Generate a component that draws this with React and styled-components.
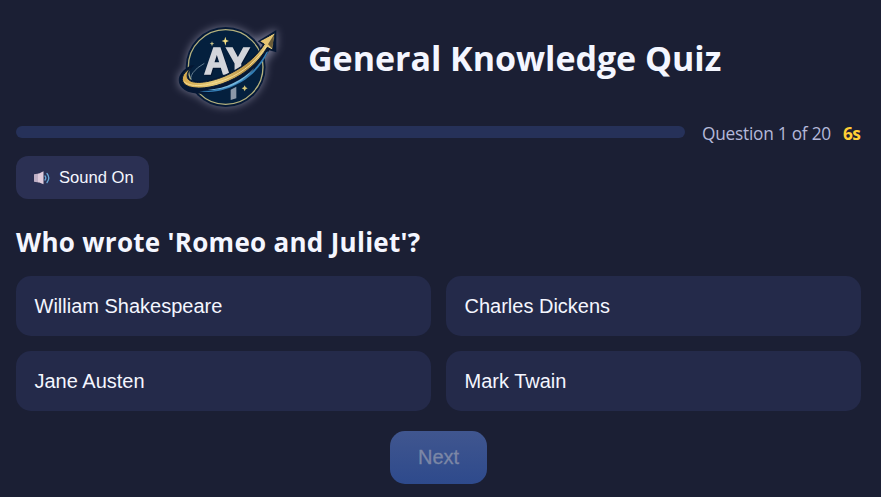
import React from "react";
import styled, { createGlobalStyle } from "styled-components";

const GlobalStyle = createGlobalStyle`
  * { box-sizing: border-box; }
  html, body { margin: 0; background: #1b1f34; }
  body {
    color: #f4f6ff;
    font-family: "Open Sans", "Noto Sans", sans-serif;
    overflow: hidden;
  }
`;

const Page = styled.main`
  min-height: 497px;
  padding: 10px 20px 0 16px;
  background: #1b1f34;
`;

const Header = styled.header`
  display: flex;
  align-items: center;
  height: 110px;
  padding-left: 149px;
`;

const LogoMark = styled.svg`
  flex: none;
  width: 130px;
  height: 110px;
  margin-right: 13px;
`;

const Title = styled.h1`
  margin: 0 0 14px;
  font-size: 34px;
  line-height: 48px;
  font-weight: 700;
  letter-spacing: -0.03px;
  white-space: nowrap;
`;

const StatusRow = styled.div`
  display: flex;
  align-items: center;
  height: 28px;
`;

const Track = styled.div`
  width: 669px;
  height: 12px;
  margin-bottom: 4px;
  border-radius: 6px;
  background: #263159;
`;

const Counter = styled.span`
  width: 129px;
  margin: 0 0 1px 17px;
  color: #b4b8d9;
  font-size: 17.3px;
  letter-spacing: -0.24px;
  white-space: nowrap;
`;

const Timer = styled.span`
  margin: 0 0 1px 12px;
  color: #ffce35;
  font-size: 17.3px;
  font-weight: 700;
  letter-spacing: -0.6px;
`;

const SoundButton = styled.button`
  display: flex;
  align-items: center;
  gap: 8px;
  width: 133px;
  height: 43px;
  margin-top: 8px;
  padding: 1px 0 0 17px;
  border: 0;
  border-radius: 12px;
  background: #2b3053;
  color: #f4f6ff;
  font: 16.6px "Liberation Sans", Arial, sans-serif;
  white-space: nowrap;
`;

const SpeakerIcon = styled.svg`
  flex: none;
  width: 18px;
  height: 16px;
`;

const Question = styled.h2`
  margin: 24px 0 14px;
  font-size: 26px;
  line-height: 39px;
  font-weight: 700;
  letter-spacing: 0.29px;
  white-space: nowrap;
`;

const Answers = styled.div`
  display: grid;
  grid-template-columns: 1fr 1fr;
  gap: 15px;
`;

const Answer = styled.button`
  height: 60px;
  padding: 0 18.5px;
  border: 0;
  border-radius: 15px;
  background: #242a4a;
  color: #f4f6ff;
  font: 20px "Liberation Sans", Arial, sans-serif;
  text-align: left;
`;

const Footer = styled.footer`
  display: flex;
  justify-content: center;
  padding-top: 20px;
`;

const NextButton = styled.button`
  width: 97px;
  height: 53px;
  padding: 0;
  border: 0;
  border-radius: 15px;
  background: linear-gradient(#40568f, #2e4a8c);
  color: #7c87a6;
  font: 20px "Liberation Sans", Arial, sans-serif;
  -webkit-text-stroke: 0.3px #7c87a6;
`;

const LogoText = styled.text`
  font: 700 108px "Liberation Sans", Arial, sans-serif;
  fill: #d3d5db;
  stroke: #d3d5db;
  stroke-width: 5px;
  filter: drop-shadow(3px 3px 0 #04152f);
`;

function Logo() {
  return (
    <LogoMark viewBox="0 0 390 330" role="img" aria-label="AY">
      <defs>
        <filter id="halo" x="-20%" y="-20%" width="140%" height="140%">
          <feGaussianBlur stdDeviation="13" />
        </filter>
        <linearGradient id="gold" x1="0" x2="1">
          <stop offset="0" stopColor="#d6a94c" />
          <stop offset="0.35" stopColor="#e5c978" />
          <stop offset="0.7" stopColor="#bb9345" />
          <stop offset="1" stopColor="#f4de8e" />
        </linearGradient>
      </defs>
      <g filter="url(#halo)" opacity="0.5" fill="#c9cae5">
        <circle cx="182" cy="171" r="120" />
        <path d="M42 190 L334 58 L334 115 L250 220 L90 255 L42 230Z" />
      </g>
      <circle cx="182" cy="171" r="120" fill="#051937" />
      <circle cx="182" cy="171" r="112" fill="#04203e" stroke="#b5b27e" strokeWidth="4" />
      <path d="M83 214Q72 205 84 188Q94 173 118 160" fill="none" stroke="#8ca5b2" strokeWidth="2" />
      <path d="M181 80L184 90L192 93L184 96L181 107L178 96L170 93L178 90Z" fill="#f4df82" />
      <path d="M141 94L143 99L148 101L143 103L141 109L139 103L134 101L139 99Z" fill="#c9c68b" />
      <LogoText x="118" y="193" textLength="136" lengthAdjust="spacingAndGlyphs">AY</LogoText>
      <path d="M197 239L214 230V265L197 270Z" fill="#8b98a9" />
      <path d="M239 226L242 232L248 235L242 238L239 244L236 238L230 235L236 232Z" fill="#d7c575" />
      <path
        d="M78 166C35 188 31 222 59 240C92 261 165 251 220 219C264 194 291 159 313 121L334 127V60L278 94L293 104C269 145 228 173 180 194C133 214 79 221 70 202C66 190 75 177 89 166Z"
        fill="#051733"
      />
      <path d="M103 243C160 245 212 225 249 195C276 173 291 151 304 127L310 124C293 164 264 195 228 217C188 240 143 252 103 243Z" fill="#347fb6" />
      <path d="M128 240C184 235 231 212 268 174C242 211 189 243 128 240Z" fill="#73b5dc" />
      <path
        d="M76 175C50 190 44 213 63 226C88 241 142 235 190 214C241 192 280 158 307 112L322 120L330 68L286 94L298 103C271 145 230 176 180 198C128 220 78 224 68 205C64 196 68 185 76 175Z"
        fill="url(#gold)"
        stroke="#061a35"
        strokeWidth="3"
      />
      <path d="M57 215C82 237 140 224 183 208C237 187 277 151 306 106" fill="none" stroke="#f2dc94" strokeWidth="3" />
      <path d="M286 94L328 72L309 102L322 115L307 109L300 101Z" fill="#e5c572" />
      <path d="M328 72L322 116L309 103Z" fill="#6a5c39" />
    </LogoMark>
  );
}

function Speaker() {
  return (
    <SpeakerIcon viewBox="0 0 18 16" aria-hidden="true">
      <path d="M1 4.2L6 3.5V12.5L1 11.7Z" fill="#c0b0c6" />
      <path d="M5 4L10.5 1.3V14.3L5 12Z" fill="#dfcbdc" />
      <path d="M12 6Q13.6 8 12 10M14 3.5Q17.6 8 14 12.5" fill="none" stroke="#69a8d7" strokeWidth="1.3" strokeLinecap="round" />
    </SpeakerIcon>
  );
}

const answers = ["William Shakespeare", "Charles Dickens", "Jane Austen", "Mark Twain"];

export default function App() {
  return (
    <>
      <GlobalStyle />
      <Page>
        <Header>
          <Logo />
          <Title>General Knowledge Quiz</Title>
        </Header>
        <StatusRow>
          <Track />
          <Counter>Question 1 of 20</Counter>
          <Timer>6s</Timer>
        </StatusRow>
        <SoundButton><Speaker />Sound On</SoundButton>
        <Question>Who wrote 'Romeo and Juliet'?</Question>
        <Answers>
          {answers.map((answer) => <Answer key={answer}>{answer}</Answer>)}
        </Answers>
        <Footer><NextButton disabled>Next</NextButton></Footer>
      </Page>
    </>
  );
}
